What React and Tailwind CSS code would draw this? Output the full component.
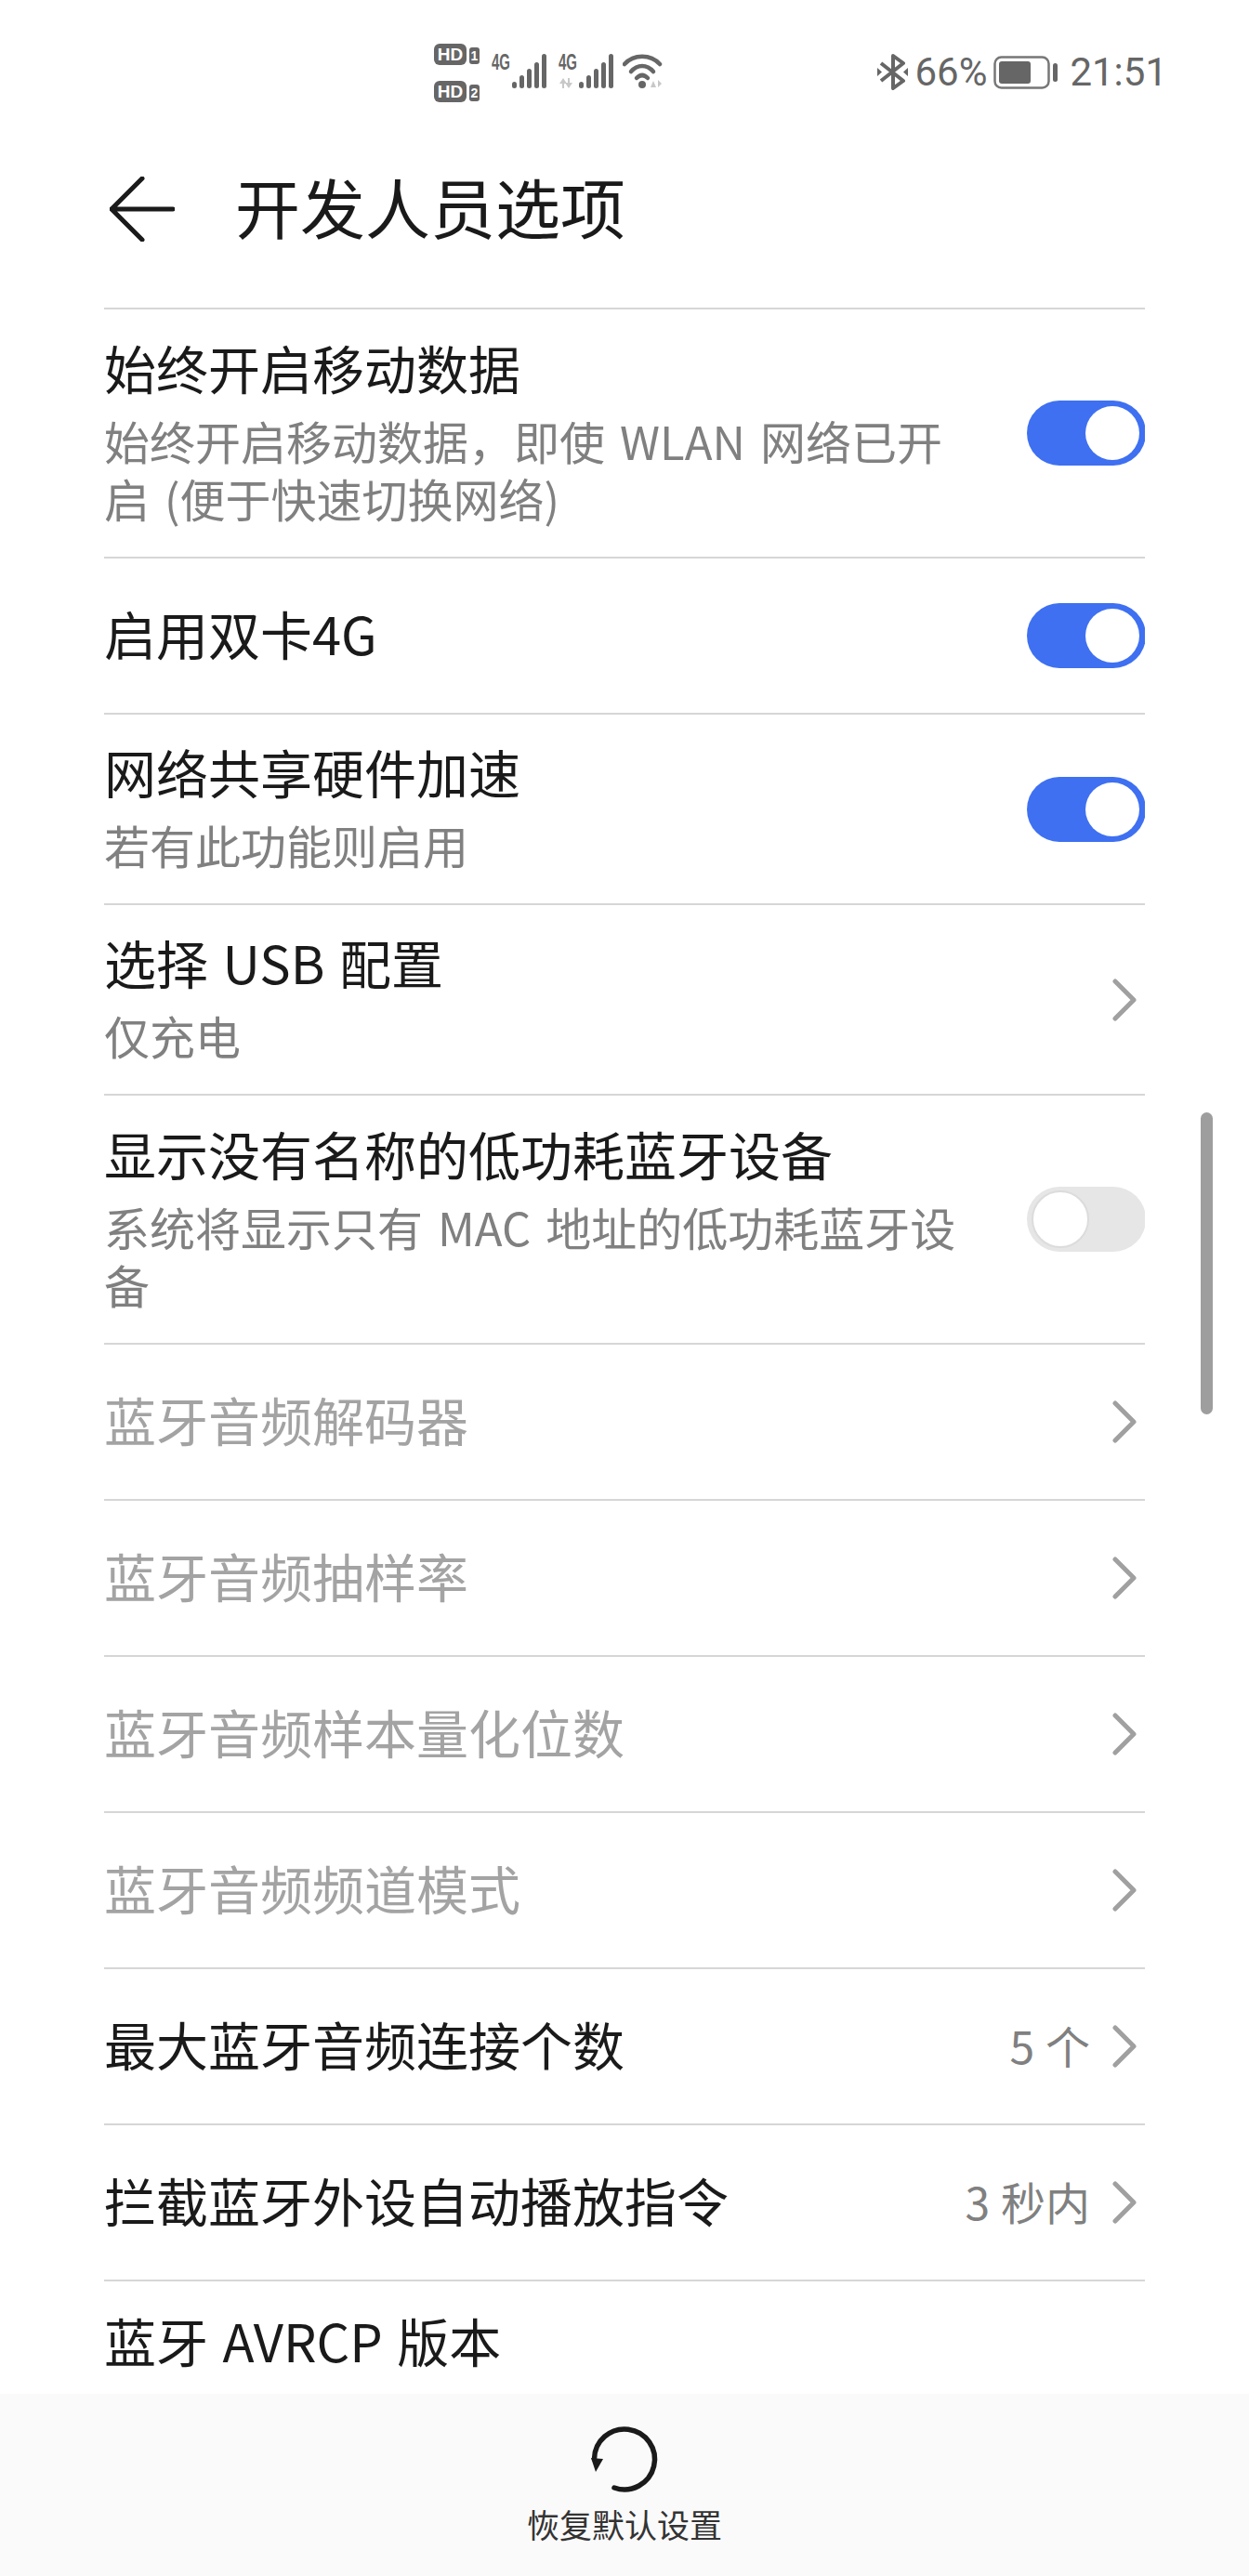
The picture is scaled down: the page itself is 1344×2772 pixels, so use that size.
import React from 'react';

const rows = [
  { title: '始终开启移动数据', sub: ['始终开启移动数据，即使 WLAN 网络已开', '启 (便于快速切换网络)'], h: 'h-[268px]', toggle: true },
  { title: '启用双卡4G', h: 'h-[168px]', toggle: true },
  { title: '网络共享硬件加速', sub: ['若有此功能则启用'], h: 'h-[205px]', toggle: true },
  { title: '选择 USB 配置', sub: ['仅充电'], h: 'h-[205px]', arrow: true },
  { title: '显示没有名称的低功耗蓝牙设备', sub: ['系统将显示只有 MAC 地址的低功耗蓝牙设', '备'], h: 'h-[268px]', toggle: false },
  { title: '蓝牙音频解码器', h: 'h-[168px]', arrow: true, dim: true },
  { title: '蓝牙音频抽样率', h: 'h-[168px]', arrow: true, dim: true },
  { title: '蓝牙音频样本量化位数', h: 'h-[168px]', arrow: true, dim: true },
  { title: '蓝牙音频频道模式', h: 'h-[168px]', arrow: true, dim: true },
  { title: '最大蓝牙音频连接个数', h: 'h-[168px]', arrow: true, value: '5 个' },
  { title: '拦截蓝牙外设自动播放指令', h: 'h-[168px]', arrow: true, value: '3 秒内' },
  { title: '蓝牙 AVRCP 版本', h: 'h-[168px]', top: true },
];

function HdBadge({ n }) {
  return (
    <svg width="50" height="24" viewBox="0 0 50 24">
      <rect x="0" y="0" width="35" height="23" rx="6" fill="#666" />
      <text x="17.5" y="18" textAnchor="middle" fontSize="19" fontWeight="700" fill="#fff" fontFamily="Liberation Sans, sans-serif">HD</text>
      <rect x="38" y="4" width="11" height="18" rx="3" fill="#666" />
      <text x="43.5" y="18" textAnchor="middle" fontSize="14" fontWeight="700" fill="#fff" fontFamily="Liberation Sans, sans-serif">{n}</text>
    </svg>
  );
}

function Signal({ arrows }) {
  return (
    <svg width="60" height="46" viewBox="0 -6 60 46" className="-mt-[6px]">
      <text x="0" y="18" fontSize="23" fontWeight="700" fill="#666" textLength="20" lengthAdjust="spacingAndGlyphs" fontFamily="Liberation Sans, sans-serif">4G</text>
      {arrows && (
        <g fill="#c8c8c8">
          <path d="M5 27l-4 6h3v5h2v-5h3z" />
          <path d="M11 38l4-6h-3v-5h-2v5H7z" />
        </g>
      )}
      <g fill="#666">
        <rect x="22" y="31" width="5" height="7" rx="2.5" />
        <rect x="30" y="24" width="5" height="14" rx="2.5" />
        <rect x="38" y="17" width="5" height="21" rx="2.5" />
        <rect x="46" y="10" width="5" height="28" rx="2.5" />
        <rect x="54" y="1" width="5" height="37" rx="2.5" />
      </g>
    </svg>
  );
}

function Wifi() {
  return (
    <svg width="44" height="40" viewBox="0 0 44 40" fill="none" className="-ml-[3px]">
      <path d="M2 12C12 1 30 1 40 12" stroke="#666" strokeWidth="4.5" strokeLinecap="round" />
      <path d="M9 20C16 12 26 12 33 20" stroke="#666" strokeWidth="4.5" strokeLinecap="round" />
      <path d="M15 27C19 23 23 23 27 27" stroke="#666" strokeWidth="4.5" strokeLinecap="round" />
      <circle cx="21" cy="34" r="4" fill="#666" />
      <path d="M33 30l-3 7h6zM38 37l4-4-4-4z" fill="#c8c8c8" />
    </svg>
  );
}

function Bluetooth() {
  return (
    <svg width="33" height="39" viewBox="0 0 33 39" fill="none" className="-mr-[3px]">
      <path d="M4 10l24 19-11 8V2l11 8L4 29" stroke="#666" strokeWidth="4" strokeLinejoin="round" />
      <path d="M0 15l5 4.500-5 4.500zM33 15l-5 4.500 5 4.500z" fill="#666" />
    </svg>
  );
}

function Battery() {
  return (
    <svg width="69" height="36" viewBox="0 0 69 36" fill="none">
      <rect x="1.500" y="1.500" width="58" height="33" rx="7" stroke="#777" strokeWidth="2.500" />
      <rect x="6" y="6" width="34" height="24" rx="3" fill="#666" />
      <rect x="64" y="8" width="5" height="20" rx="2.500" fill="#666" />
    </svg>
  );
}

function Toggle({ on }) {
  return (
    <div className={on ? '-mr-px flex h-[70px] w-[128px] items-center justify-end rounded-full bg-[#3e70f1] pr-[7px]' : '-mr-px flex h-[70px] w-[128px] items-center justify-start rounded-full bg-[#e6e6e6] pl-[5px]'}>
      <div className={on ? 'h-[58px] w-[58px] rounded-full bg-white' : 'h-[62px] w-[62px] rounded-full border-2 border-[#dcdcdc] bg-white'} />
    </div>
  );
}

function Chevron() {
  return (
    <svg width="26" height="46" viewBox="0 0 26 46" fill="none" className="mr-[9px]">
      <path d="M3 3l20 20L3 43" stroke="#a0a0a0" strokeWidth="5" strokeLinecap="round" strokeLinejoin="round" />
    </svg>
  );
}

function Row({ row }) {
  return (
    <div className={`flex ${row.h} shrink-0 justify-between border-t-2 border-[#d6d6d6] ${row.top ? 'items-start pt-[27px]' : 'items-center'}`}>
      <div className="min-w-0 pb-[7px]">
        <div className={`h-[72px] text-[56px] leading-[72px] whitespace-nowrap [word-spacing:3px] ${row.dim ? 'text-[#a3a3a3]' : 'text-[#1a1a1a]'}`}>{row.title}</div>
        {row.sub && (
          <div className="mt-[12px] text-[49px] leading-[62px] whitespace-nowrap text-[#808080] [word-spacing:5px]">
            {row.sub.map((line) => <div key={line}>{line}</div>)}
          </div>
        )}
      </div>
      {row.toggle !== undefined && <Toggle on={row.toggle} />}
      {row.arrow && (
        <div className="flex items-center">
          {row.value && <span className="mr-[24px] pb-[4px] text-[48px] text-[#808080] [word-spacing:1px]">{row.value}</span>}
          <Chevron />
        </div>
      )}
    </div>
  );
}

export default function App() {
  return (
    <div className="relative flex h-[2772px] w-[1344px] flex-col overflow-hidden bg-white font-['Noto_Sans_CJK_SC','Noto_Sans',sans-serif]">
      {/* barre d'etat */}
      <div className="flex h-[112px] shrink-0 items-start justify-between pl-[467px] pr-[88px] pt-[47px]">
        <div className="flex items-start gap-[12px]">
          <div className="flex flex-col gap-[16px]">
            <HdBadge n="1" />
            <HdBadge n="2" />
          </div>
          <div className="mt-[10px] flex items-start gap-[12px]">
            <Signal />
            <Signal arrows />
            <Wifi />
          </div>
        </div>
        <div className="mt-[11px] flex items-center gap-[10px] font-['Roboto',sans-serif] text-[42px] leading-[39px] text-[#666]">
          <Bluetooth />
          <span className="-mr-[3px]">66%</span>
          <Battery />
          <span className="ml-[3px]">21:51</span>
        </div>
      </div>

      {/* en-tete */}
      <div className="flex h-[219px] shrink-0 items-start pl-[118px] pt-[75px]">
        <svg width="70" height="70" viewBox="0 0 70 70" fill="none" className="mt-[3px]">
          <path d="M35 2L2 35l33 33M2 35h66" stroke="#1a1a1a" strokeWidth="5" strokeLinecap="round" strokeLinejoin="round" />
        </svg>
        <div className="ml-[65px] text-[70px] leading-[70px] text-[#1a1a1a]">开发人员选项</div>
      </div>

      {/* liste */}
      <div className="mx-[112px] flex-1 overflow-hidden">
        {rows.map((row) => <Row key={row.title} row={row} />)}
      </div>

      {/* barre de defilement */}
      <div className="absolute left-[1292px] top-[1197px] h-[325px] w-[13px] rounded-full bg-[#9e9e9e]" />

      {/* action du bas */}
      <div className="flex h-[196px] shrink-0 flex-col items-center bg-[#fafafa] pt-[30px]">
        <svg width="80" height="80" viewBox="0 0 80 80" fill="none">
          <path d="M29 71A32.500 32.500 0 1 0 7.500 40" stroke="#1a1a1a" strokeWidth="5.500" strokeLinecap="round" />
          <path d="M4 39l13 1-8 14z" fill="#1a1a1a" />
        </svg>
        <div className="mt-[7px] text-[35px] leading-[46px] text-[#333]">恢复默认设置</div>
      </div>
    </div>
  );
}
